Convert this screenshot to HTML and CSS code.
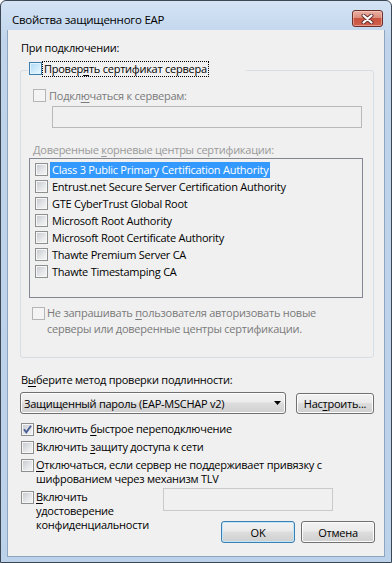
FILE: index.html
```html
<!DOCTYPE html>
<html><head>
    <meta charset="utf-8">
    <title>Свойства защищенного EAP</title>
    <link rel="stylesheet" href="styles.css">
</head>
<body>
<div class="window">
    <div class="titlebar">
        <span class="title">Свойства защищенного EAP</span>
        <span class="close">
            <svg width="13" height="10" viewBox="0 0 13 10">
                <path d="M2.5 1.5 L10.5 8.5 M10.5 1.5 L2.5 8.5" stroke="#5b2c28" stroke-width="4" stroke-linecap="round"/>
                <path d="M2.5 1.5 L10.5 8.5 M10.5 1.5 L2.5 8.5" stroke="#fff" stroke-width="2.2" stroke-linecap="round"/>
            </svg>
        </span>
    </div>
    <div class="client">
        <div class="heading">При подключении:</div>

        <fieldset class="group">
            <legend class="group-title"><span class="legend-box"><span class="cb hot"></span><span class="focus">Провер<u>я</u>ть сертификат сервера</span></span></legend>

            <div class="row servers"><span class="cb off"></span><span class="dim">Подкл<u>ю</u>чаться к серверам:</span></div>
            <div class="edit servers-edit"></div>

            <div class="caption">Доверенные <u>к</u>орневые центры сертификации:</div>
            <div class="list">
                <div class="item"><span class="cb"></span><span class="item-text selected">Class 3 Public Primary Certification Authority</span></div>
                <div class="item"><span class="cb"></span><span class="item-text">Entrust.net Secure Server Certification Authority</span></div>
                <div class="item"><span class="cb"></span><span class="item-text">GTE CyberTrust Global Root</span></div>
                <div class="item"><span class="cb"></span><span class="item-text">Microsoft Root Authority</span></div>
                <div class="item"><span class="cb"></span><span class="item-text">Microsoft Root Certificate Authority</span></div>
                <div class="item"><span class="cb"></span><span class="item-text">Thawte Premium Server CA</span></div>
                <div class="item"><span class="cb"></span><span class="item-text">Thawte Timestamping CA</span></div>
            </div>

            <div class="row prompt"><span class="cb off"></span><span class="dim">Не запрашивать <u>п</u>ользователя авторизовать новые<br>серверы или доверенные центры сертификации.</span></div>
        </fieldset>

        <div class="heading method-label">В<u>ы</u>берите метод проверки подлинности:</div>
        <div class="method-row">
            <div class="combo">
                <span>Защищенный пароль (EAP-MSCHAP v2)</span>
                <svg width="7" height="4" viewBox="0 0 7 4"><polygon points="0,0 7,0 3.5,4" fill="#000"/></svg>
            </div>
            <div class="button configure">Нас<u>т</u>роить...</div>
        </div>

        <div class="options">
            <div class="option"><span class="cb checked"><svg width="11" height="11" viewBox="0 0 11 11"><polyline points="2,5.2 4.3,8.4 9,1.8" fill="none" stroke="#4b5f97" stroke-width="1.9"/></svg></span><span>Включить <u>б</u>ыстрое переподключение</span></div>
            <div class="option"><span class="cb"></span><span>Включить <u>з</u>ащиту доступа к сети</span></div>
            <div class="option"><span class="cb"></span><span><u>О</u>тключаться, если сервер не поддерживает привязку с<br>шифрованием через механизм TLV</span></div>
            <div class="last">
                <div class="option"><span class="cb"></span><span><u>В</u>ключить<br>удостоверение<br>конфиденциальности</span></div>
                <div class="last-right">
                    <div class="edit identity-edit"></div>
                    <div class="buttons">
                        <div class="button default">OK</div>
                        <div class="button">Отмена</div>
                    </div>
                </div>
            </div>
        </div>
    </div>
</div>
</body></html>
```

FILE: styles.css
```css
body {margin: 0; font-family: "Open Sans", "Noto Sans", sans-serif; font-size: 11px; letter-spacing: -0.25px; color: #000;}
u {text-decoration-thickness: 1px; text-underline-offset: 2px;}

.window {width: 392px; height: 563px; box-sizing: border-box; border: 1px solid #3d4753; border-radius: 6px 6px 0 0;
         background: linear-gradient(#d3e3f4, #bfd4eb 40px, #bcd2ea); padding: 0 6px 5px; display: flex; flex-direction: column;}
.titlebar {height: 29px; flex: none; display: flex; align-items: flex-start; justify-content: space-between; padding: 0 2px 0 5px;}
.title {margin-top: 11px; line-height: 15px; font-size: 11.5px;}
.close {margin-top: 9px; width: 31px; height: 17px; box-sizing: border-box; border: 1px solid #6b302a; border-radius: 3px;
        background: linear-gradient(#eab1a4, #dc8d7d 45%, #c9533f 50%, #cf604c 100%);
        box-shadow: inset 0 0 0 1px rgba(255,220,210,0.45); display: flex; align-items: center; justify-content: center;}

.client {flex: 1; background: #f0f0f0; border: 1px solid #8ea5bf; border-top: 0; padding: 10px 10px 0 12px;}
.heading {line-height: 15px; padding-left: 1px;}

.group {margin: 6px 0 0; padding: 0 0 20px; border: 1px solid #d5dfe5; border-radius: 3px; min-width: 0;}
.group-title {margin-left: 7px; padding: 0 0 0 1px; width: 218px; height: 18px; box-sizing: border-box;}
.legend-box {display: inline-flex; align-items: flex-start; vertical-align: top;}
.legend-box .cb {margin-top: 1px;}
.focus {flex: none; border: 1px dotted #000; padding: 0 1px; line-height: 14px;}

.row {display: flex; align-items: center; line-height: 15px;}
.row .cb {margin-right: 3px;}
.dim {color: #7a7a7a;}
.servers {margin-top: 9px; padding-left: 12px;}
.edit {box-sizing: border-box; border: 1px solid #b8b8b8; background: #f0f0f0;}
.servers-edit {margin: 3px 0 0 31px; width: 310px; height: 22px;}
.caption {margin-top: 14px; padding-left: 12px; line-height: 15px; color: #9a9a9a;}

.list {margin: 1px 0 0 8px; width: 334px; height: 140px; box-sizing: border-box; border: 1px solid #828790; padding-top: 2px;}
.item {height: 17px; display: flex; align-items: center; padding-left: 5px;}
.item-text {margin-left: 2px; padding: 0 2px; line-height: 16px;}
.selected {background: #3399ff; color: #fff;}

.prompt {margin-top: 7px; padding-left: 11px; align-items: flex-start; line-height: 16px;}
.prompt .cb {margin-top: 2px; margin-right: 2px;}

.method-label {margin-top: 14px;}
.method-row {margin-top: 5px; display: flex; align-items: flex-start; gap: 10px;}
.combo {width: 266px; height: 22px; box-sizing: border-box; border: 1px solid #707070; border-radius: 3px;
        background: linear-gradient(#f2f2f2, #ebebeb 45%, #dddddd 50%, #cfcfcf); box-shadow: inset 0 0 0 1px #fcfcfc;
        display: flex; align-items: center; justify-content: space-between; padding: 0 4px 0 3px;}
.button {box-sizing: border-box; height: 22px; border: 1px solid #707070; border-radius: 3px;
         background: linear-gradient(#f2f2f2, #ebebeb 45%, #dddddd 50%, #cfcfcf); box-shadow: inset 0 0 0 1px #fcfcfc;
         display: flex; align-items: center; justify-content: center; width: 74px;}
.configure {width: 78px; height: 21px; margin-top: 1px;}
.default {border-color: #3c7fb1; box-shadow: inset 0 0 0 1px #bfe6fa;}

.options {margin-top: 8px; display: flex; flex-direction: column; gap: 4px;}
.option {display: flex; align-items: flex-start; line-height: 14px; padding-left: 1px;}
.option .cb {margin-top: 1px; margin-right: 2px;}
.last {display: grid; grid-template-columns: 143px 1fr;}
.identity-edit {margin-top: -2px; width: 170px; height: 23px; border-color: #cacaca;}
.buttons {margin: 10px -1px 0 0; display: flex; justify-content: flex-end; gap: 6px;}

.cb {flex: none; width: 13px; height: 13px; box-sizing: border-box; border: 1px solid #8e8f8f;
     background: linear-gradient(135deg, #c3c7cd, #e6e8ea 60%, #f6f6f6); box-shadow: inset 0 0 0 1px #f6f6f6;}
.cb svg {display: block;}
.off {border-color: #b5b5b5; background: #f4f4f4; box-shadow: none;}
.hot {border-color: #3c7fb1; background: linear-gradient(135deg, #a9d9f6, #d9f0fc 70%, #eef8fe); box-shadow: inset 0 0 0 1px #e3f3fc;}
```
